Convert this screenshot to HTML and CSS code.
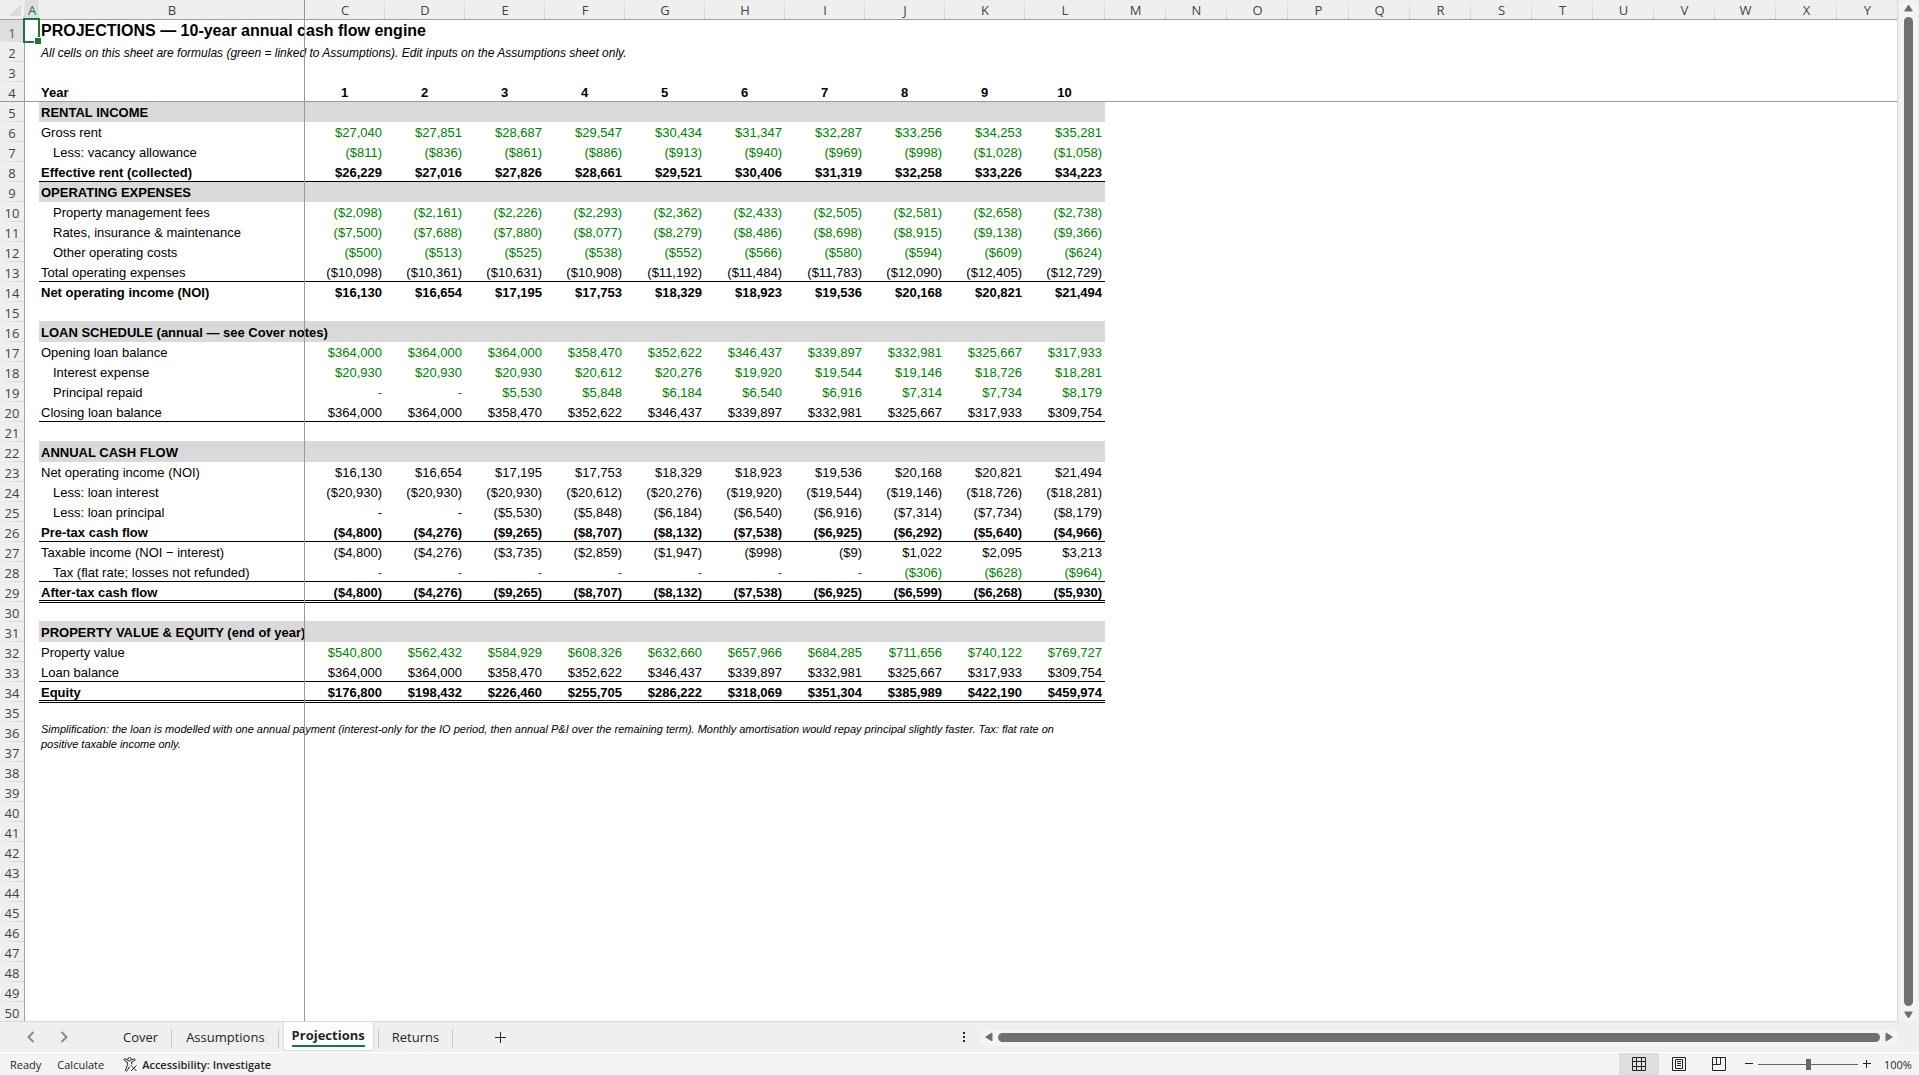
FILE: index.html
```html
<!DOCTYPE html>
<html lang="en">
<head>
<meta charset="utf-8">
<title>Projections</title>
<link rel="stylesheet" href="styles.css">
</head>
<body>
<main class="workbook">
  <div class="viewport">
    <div class="sheet">
      <table class="grid" id="grid"></table>
      <div class="freeze-v"></div>
      <div class="freeze-h"></div>
      <div class="cursor"></div>
    </div>
    <div class="vscroll">
      <svg class="arrow" width="9" height="8" viewBox="0 0 9 8"><path d="M4.500 1 8.300 7H.7z"/></svg>
      <div class="thumb"></div>
      <svg class="arrow" width="9" height="8" viewBox="0 0 9 8"><path d="M4.500 7 8.300 1H.7z"/></svg>
    </div>
  </div>

  <nav class="tabbar">
    <div class="tab-side">
      <div class="tab-nav">
        <button class="icon-btn" aria-label="Previous sheet"><svg width="8" height="12" viewBox="0 0 8 12"><path d="M6.500 1 1.500 6l5 5"/></svg></button>
        <button class="icon-btn" aria-label="Next sheet"><svg width="8" height="12" viewBox="0 0 8 12"><path d="M1.500 1l5 5-5 5"/></svg></button>
      </div>
      <div class="tabs">
        <button class="tab">Cover</button>
        <button class="tab">Assumptions</button>
        <button class="tab active"><span>Projections</span></button>
        <button class="tab">Returns</button>
      </div>
      <button class="icon-btn add" aria-label="New sheet"><svg width="11" height="11" viewBox="0 0 11 11"><path d="M5.500 0v11M0 5.500h11"/></svg></button>
      <svg class="dots" width="2" height="10" viewBox="0 0 2 10"><path d="M0 0h2v2H0zM0 4h2v2H0zM0 8h2v2H0z"/></svg>
    </div>
    <div class="hscroll">
      <svg class="arrow" width="8" height="10" viewBox="0 0 8 10"><path d="M.7 5 7 1v8z"/></svg>
      <div class="thumb"></div>
      <svg class="arrow" width="8" height="10" viewBox="0 0 8 10"><path d="M7.300 5 1 1v8z"/></svg>
    </div>
  </nav>

  <footer class="status">
    <span class="ready">Ready</span>
    <span class="calc">Calculate</span>
    <button class="access">
      <svg width="15" height="15" viewBox="0 0 15 15"><circle cx="6.500" cy="2.300" r="1.700"/><path d="M4.800 3 2 1.800C.8 1.600.3 3 1.300 3.500L4.300 5v3.500L2.500 13c-.2 1.200 1.200 1.600 1.800.6L6.500 9.500M8.200 3 11 1.800c1.200-.2 1.700 1.200.7 1.700L8.700 5v2.500M8 8.500l5.500 5.500M13.500 8.500 8 14"/></svg>
      <span>Accessibility: Investigate</span>
    </button>
    <div class="views">
      <button class="view on" aria-label="Normal"><svg width="14" height="14" viewBox="0 0 14 14"><path d="M.5.5h13v13H.5zM.5 4.500h13M.5 9.500h13M4.500.5v13M9.500.5v13"/></svg></button>
      <button class="view" aria-label="Page layout"><svg width="14" height="14" viewBox="0 0 14 14"><path d="M.5.500h13v13H.5zM3.500 2.500h7v9h-7zM5 4.500h4M5 6.500h4M5 8.500h4"/></svg></button>
      <button class="view" aria-label="Page break preview"><svg width="14" height="14" viewBox="0 0 14 14"><path d="M.5.500h13v13H.5zM.5 7.500h8V.5M4.500.5v7"/></svg></button>
    </div>
    <div class="zoom">
      <button class="icon-btn" aria-label="Zoom out"><svg width="8" height="8" viewBox="0 0 8 8"><path d="M0 3.500h8"/></svg></button>
      <input type="range" min="0" max="200" value="100" aria-label="Zoom">
      <button class="icon-btn" aria-label="Zoom in"><svg width="8" height="8" viewBox="0 0 8 8"><path d="M0 3.500h8M3.500 0v8"/></svg></button>
      <span class="pct">100%</span>
    </div>
  </footer>
</main>
<script src="app.js"></script>
</body>
</html>
```
FILE: styles.css
```css
* { box-sizing: border-box; }

body {
  margin: 0;
  font-family: "Open Sans", "Noto Sans", sans-serif;
  color: #262626;
  background: #efefef;
}

button {
  border: 0;
  padding: 0;
  background: none;
  font: inherit;
  color: inherit;
}

svg { display: block; }

.workbook {
  display: flex;
  flex-direction: column;
  height: 100vh;
}

/* Sheet area */
.viewport {
  display: flex;
  flex: 1;
  min-height: 0;
}

.sheet {
  position: relative;
  flex: 1;
  min-width: 0;
  overflow: hidden;
  background: #fff;
  border-right: 1px solid #d9d9d9;
  border-bottom: 1px solid #d9d9d9;
}

.grid {
  width: 1898px;
  table-layout: fixed;
  border-collapse: separate;
  border-spacing: 0;
  font-family: "Liberation Sans", Arial, sans-serif;
  font-size: 13px;
  line-height: 16px;
  color: #000;
}

.col-head { width: 25px; }
.col-a { width: 14px; }
.col-b { width: 266px; }
.col-year { width: 80px; }
.col-rest { width: 61px; }

.grid tr { height: 20px; }
.grid tr.tall { height: 22px; }

.grid th,
.grid td {
  padding: 0 3px 1px 2px;
  height: 20px;
  white-space: nowrap;
  vertical-align: bottom;
}

.grid thead th,
.grid tbody th {
  padding: 0;
  font-family: "Open Sans", "Noto Sans", sans-serif;
  font-weight: 400;
  font-size: 13px;
  line-height: 18px;
  color: #444;
  text-align: center;
}

.grid thead th {
  border-bottom: 1px solid #a0a0a0;
  background: linear-gradient(#efefef, #cfcfcf) right / 1px 100% no-repeat #efefef;
}

.grid tbody th {
  border-right: 1px solid #a0a0a0;
  background: linear-gradient(to right, #efefef, #cfcfcf) bottom / 100% 1px no-repeat #efefef;
}

.corner svg { margin: 0 4px 0 auto; }

.grid thead th.picked,
.grid tbody th.picked {
  background-color: #dedede;
  color: #107c41;
}

.grid td.indent { padding-left: 14px; }
.grid td.num { text-align: right; }
.grid .head td.num { text-align: center; }
.grid .bold td { font-weight: 700; }
.grid .section td.fill { background: #d9d9d9; font-weight: 700; }
.grid .spaced td.fill { box-shadow: 0 -1px 0 #d9d9d9; }
.grid td.link { color: #008000; }
.grid .line td.fill { border-bottom: 1px solid #000; padding-bottom: 0; }
.grid .double td.fill {
  box-shadow: 0 1px 0 #000, inset 0 -1px 0 #fff, inset 0 -2px 0 #000;
}

.grid .title { font-size: 16px; line-height: 20px; font-weight: 700; }
.grid .sub { font-size: 12px; font-style: italic; }
.grid td.note {
  padding: 0 32px 0 2px;
  font-size: 11px;
  line-height: 15px;
  font-style: italic;
  white-space: normal;
  vertical-align: top;
}

/* Selected cell */
.cursor {
  position: absolute;
  left: 23px;
  top: 18px;
  width: 17px;
  height: 25px;
  border: 2px solid #217346;
}

.cursor::after {
  content: "";
  position: absolute;
  right: -3px;
  bottom: -3px;
  width: 6px;
  height: 6px;
  background: #217346;
  border: 1px solid #fff;
  border-width: 1px 0 0 1px;
}

/* Frozen pane dividers */
.freeze-v {
  position: absolute;
  left: 304px;
  top: 0;
  bottom: 0;
  width: 1px;
  background: #999;
}

.freeze-h {
  position: absolute;
  top: 101px;
  left: 0;
  right: 0;
  height: 1px;
  background: #999;
}

.arrow {
  flex: none;
  fill: #707070;
  stroke: #707070;
  stroke-linejoin: round;
}

.vscroll {
  display: flex;
  flex-direction: column;
  align-items: center;
  gap: 5px;
  width: 17px;
  margin: 0 2px 0 2px;
  padding: 4px 0 3px;
  background: #f4f4f4;
  border-radius: 8px;
}

.thumb { flex: 1; background: #707070; border-radius: 5px; }
.vscroll .thumb { width: 9px; }

/* Sheet tabs */
.tabbar {
  display: flex;
  align-items: center;
  height: 31px;
  font-size: 13px;
  border-bottom: 1px solid #fff;
}

.tab-side {
  display: flex;
  align-items: center;
  align-self: stretch;
  width: 51%;
  padding-right: 14px;
}

.icon-btn svg,
.access svg,
.view svg {
  fill: none;
  stroke: #262626;
}

.tab-nav {
  display: flex;
  gap: 25px;
  width: 109px;
  padding-left: 27px;
}

.tab-nav svg { stroke: #8a8a8a; stroke-width: 2; }

.tabs { display: flex; align-self: stretch; }

.tab {
  position: relative;
  padding: 0 14px;
}

.tab:not(.active)::after,
.tab.active + .tab::before {
  content: "";
  position: absolute;
  right: 0;
  top: 7px;
  width: 1px;
  height: 19px;
  background: #c6c6c6;
}

.tab.active + .tab::before { left: 0; right: auto; }

.tab.active {
  margin: 0 4px;
  height: 29px;
  padding: 0 8px;
  background: #fff;
  border: 1px solid #dedede;
  border-top: 0;
  border-radius: 0 0 4px 4px;
  font-weight: 700;
}

.tab.active span {
  display: block;
  line-height: 20px;
  border-bottom: 2px solid #107c41;
}

.add { margin-left: 42px; }
.dots { margin-left: auto; fill: #262626; }

.hscroll {
  display: flex;
  flex: 1;
  align-items: center;
  gap: 5px;
  height: 17px;
  margin: 0 21px 0 1px;
  padding: 0 5px;
  background: #f4f4f4;
  border-radius: 8px;
}

.hscroll .thumb { height: 9px; }

/* Status bar */
.status {
  display: flex;
  align-items: center;
  height: 22px;
  padding: 0 8px 0 10px;
  font-size: 11px;
  background: #f4f4f4;
}

.calc { margin-left: 16px; }

.access {
  display: flex;
  align-items: center;
  gap: 4px;
  margin-left: 19px;
  font-weight: 600;
}

.views { display: flex; align-self: stretch; margin-left: auto; }

.view {
  display: grid;
  place-items: center;
  width: 40px;
}

.view.on { background: #dedede; }

.zoom { display: flex; align-items: center; margin-left: 6px; }

.zoom input {
  appearance: none;
  width: 100px;
  height: 11px;
  margin: 0 5px;
  background: linear-gradient(#666, #666) center / 100% 1px no-repeat;
}

.zoom input::-webkit-slider-thumb {
  appearance: none;
  width: 5px;
  height: 11px;
  background: #666;
}

.pct { width: 27px; margin-left: 13px; }
```
FILE: app.js
```js
const columns = "ABCDEFGHIJKLMNOPQRSTUVWXY".split("");
const ROWS = 50;

// Row number -> [label, row classes, values]; a leading ">" indents, a leading "~" marks linked cells.
const rows = {
  4: ["Year", "bold head", "1 2 3 4 5 6 7 8 9 10"],
  5: ["RENTAL INCOME", "section", ""],
  6: ["Gross rent", "", "~$27,040 $27,851 $28,687 $29,547 $30,434 $31,347 $32,287 $33,256 $34,253 $35,281"],
  7: [">Less: vacancy allowance", "", "~($811) ($836) ($861) ($886) ($913) ($940) ($969) ($998) ($1,028) ($1,058)"],
  8: ["Effective rent (collected)", "bold line", "$26,229 $27,016 $27,826 $28,661 $29,521 $30,406 $31,319 $32,258 $33,226 $34,223"],
  9: ["OPERATING EXPENSES", "section", ""],
  10: [">Property management fees", "", "~($2,098) ($2,161) ($2,226) ($2,293) ($2,362) ($2,433) ($2,505) ($2,581) ($2,658) ($2,738)"],
  11: [">Rates, insurance & maintenance", "", "~($7,500) ($7,688) ($7,880) ($8,077) ($8,279) ($8,486) ($8,698) ($8,915) ($9,138) ($9,366)"],
  12: [">Other operating costs", "", "~($500) ($513) ($525) ($538) ($552) ($566) ($580) ($594) ($609) ($624)"],
  13: ["Total operating expenses", "line", "($10,098) ($10,361) ($10,631) ($10,908) ($11,192) ($11,484) ($11,783) ($12,090) ($12,405) ($12,729)"],
  14: ["Net operating income (NOI)", "bold", "$16,130 $16,654 $17,195 $17,753 $18,329 $18,923 $19,536 $20,168 $20,821 $21,494"],
  16: ["LOAN SCHEDULE (annual — see Cover notes)", "section spaced", ""],
  17: ["Opening loan balance", "", "~$364,000 $364,000 $364,000 $358,470 $352,622 $346,437 $339,897 $332,981 $325,667 $317,933"],
  18: [">Interest expense", "", "~$20,930 $20,930 $20,930 $20,612 $20,276 $19,920 $19,544 $19,146 $18,726 $18,281"],
  19: [">Principal repaid", "", "~- - $5,530 $5,848 $6,184 $6,540 $6,916 $7,314 $7,734 $8,179"],
  20: ["Closing loan balance", "line", "$364,000 $364,000 $358,470 $352,622 $346,437 $339,897 $332,981 $325,667 $317,933 $309,754"],
  22: ["ANNUAL CASH FLOW", "section spaced", ""],
  23: ["Net operating income (NOI)", "", "$16,130 $16,654 $17,195 $17,753 $18,329 $18,923 $19,536 $20,168 $20,821 $21,494"],
  24: [">Less: loan interest", "", "($20,930) ($20,930) ($20,930) ($20,612) ($20,276) ($19,920) ($19,544) ($19,146) ($18,726) ($18,281)"],
  25: [">Less: loan principal", "", "- - ($5,530) ($5,848) ($6,184) ($6,540) ($6,916) ($7,314) ($7,734) ($8,179)"],
  26: ["Pre-tax cash flow", "bold line", "($4,800) ($4,276) ($9,265) ($8,707) ($8,132) ($7,538) ($6,925) ($6,292) ($5,640) ($4,966)"],
  27: ["Taxable income (NOI − interest)", "", "($4,800) ($4,276) ($3,735) ($2,859) ($1,947) ($998) ($9) $1,022 $2,095 $3,213"],
  28: [">Tax (flat rate; losses not refunded)", "line", "~- - - - - - - ($306) ($628) ($964)"],
  29: ["After-tax cash flow", "bold double", "($4,800) ($4,276) ($9,265) ($8,707) ($8,132) ($7,538) ($6,925) ($6,599) ($6,268) ($5,930)"],
  31: ["PROPERTY VALUE & EQUITY (end of year)", "section spaced", ""],
  32: ["Property value", "", "~$540,800 $562,432 $584,929 $608,326 $632,660 $657,966 $684,285 $711,656 $740,122 $769,727"],
  33: ["Loan balance", "line", "$364,000 $364,000 $358,470 $352,622 $346,437 $339,897 $332,981 $325,667 $317,933 $309,754"],
  34: ["Equity", "bold double", "$176,800 $198,432 $226,460 $255,705 $286,222 $318,069 $351,304 $385,989 $422,190 $459,974"]
};

const notes = {
  1: ["title", "PROJECTIONS — 10-year annual cash flow engine"],
  2: ["sub", "All cells on this sheet are formulas (green = linked to Assumptions). Edit inputs on the Assumptions sheet only."]
};

const footnote = "Simplification: the loan is modelled with one annual payment (interest-only for the IO period, then annual P&I over the remaining term). Monthly amortisation would repay principal slightly faster. Tax: flat rate on positive taxable income only.";

const esc = (s) => s.replace(/&/g, "&amp;");

function cells(n) {
  if (notes[n]) return `<td></td><td class="${notes[n][0]}">${notes[n][1]}</td>`;
  if (n === 36) return `<td></td><td class="note" colspan="11" rowspan="2">${esc(footnote)}</td>`;
  if (!rows[n]) return "";
  const [label, , data] = rows[n];
  const linked = data.startsWith("~") ? " link" : "";
  const values = data ? data.replace("~", "").split(" ") : Array(10).fill("");
  const indent = label.startsWith(">") ? " indent" : "";
  return `<td></td><td class="fill${indent}">${esc(label.replace(">", ""))}</td>` +
    values.map((v) => `<td class="fill num${linked}">${v}</td>`).join("");
}

let html = '<colgroup><col class="col-head"><col class="col-a"><col class="col-b">' +
  '<col class="col-year">'.repeat(10) + '<col class="col-rest">'.repeat(13) + "</colgroup>";
html += '<thead><tr><th class="corner"><svg width="12" height="15"><path d="M12 0v12H0z" fill="#dcdcdc"/></svg></th>' +
  columns.map((c) => `<th${c === "A" ? ' class="picked"' : ""}>${c}</th>`).join("") + "</tr></thead><tbody>";
for (let n = 1; n <= ROWS; n++) {
  const cls = n === 1 ? "tall" : rows[n] ? rows[n][1] : "";
  html += `<tr class="${cls}"><th${n === 1 ? ' class="picked"' : ""}>${n}</th>${cells(n)}</tr>`;
}
document.getElementById("grid").innerHTML = html + "</tbody>";
```
